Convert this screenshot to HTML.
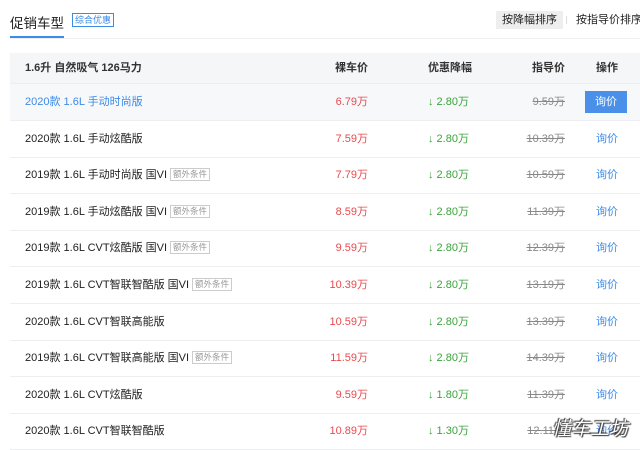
<!DOCTYPE html>
<html><head><meta charset="utf-8"><style>
*{margin:0;padding:0;box-sizing:border-box}
body{width:640px;height:450px;background:#fff;font-family:"Liberation Sans","Noto Sans CJK SC",sans-serif;position:relative;overflow:hidden;color:#333}
.a{position:absolute;white-space:nowrap}
.row{position:absolute;left:10px;width:630px;height:37px;border-bottom:1px solid #eceef1;font-size:11px;color:#222}
.row span{position:absolute;top:0;line-height:36px}
.n{left:15px}
.p{right:272px;color:#e84a4f}
.d{left:418px;color:#3aa43b}
.g{right:75px;color:#888;text-decoration:line-through}
.o{left:586px;color:#3c8be8}
.tag{display:inline-block;font-size:8.5px;color:#999;border:1px solid #ccc;line-height:11px;padding:0 2px;margin-left:3px;vertical-align:1px;font-style:normal}
</style></head><body>
<div class="a" style="left:10px;top:12px;font-size:13.5px;color:#222">促销车型</div>
<div class="a" style="left:72px;top:13px;font-size:9px;color:#3c8be8;border:1px solid #3c8be8;padding:0 2px;line-height:12px">综合优惠</div>
<div class="a" style="left:10px;top:36px;width:54px;height:2px;background:#3c8be8"></div>
<div class="a" style="left:10px;top:38px;width:630px;height:1px;background:#eceef1"></div>
<div class="a" style="left:496px;top:11px;background:#eee;font-size:11px;padding:0 6px;line-height:18px;color:#222">按降幅排序</div>
<div class="a" style="left:566px;top:16px;width:1px;height:8px;background:#ddd"></div>
<div class="a" style="left:576px;top:11px;font-size:11px;line-height:18px;color:#222">按指导价排序</div>
<div class="a" style="left:10px;top:53px;width:630px;height:31px;background:#f5f6f8;border-bottom:1px solid #eceef1;font-size:11px;font-weight:bold;color:#333">
<span class="a" style="left:15px;line-height:30px">1.6升 自然吸气 126马力</span>
<span class="a" style="right:272px;line-height:30px">裸车价</span>
<span class="a" style="left:418px;line-height:30px">优惠降幅</span>
<span class="a" style="right:75px;line-height:30px">指导价</span>
<span class="a" style="left:586px;line-height:30px">操作</span>
</div>
<div class="row" style="top:84px;background:#f7f8fa"><span class="n" style="color:#3c8be8">2020款 1.6L 手动时尚版</span><span class="p">6.79万</span><span class="d">↓ 2.80万</span><span class="g">9.59万</span><span style="left:575px;top:7px;width:42px;height:22px;line-height:22px;background:#4a90e8;color:#fff;text-align:center">询价</span></div>
<div class="row" style="top:120.6px"><span class="n">2020款 1.6L 手动炫酷版</span><span class="p">7.59万</span><span class="d">↓ 2.80万</span><span class="g">10.39万</span><span class="o">询价</span></div>
<div class="row" style="top:157.2px"><span class="n">2019款 1.6L 手动时尚版 国VI<i class="tag">额外条件</i></span><span class="p">7.79万</span><span class="d">↓ 2.80万</span><span class="g">10.59万</span><span class="o">询价</span></div>
<div class="row" style="top:193.8px"><span class="n">2019款 1.6L 手动炫酷版 国VI<i class="tag">额外条件</i></span><span class="p">8.59万</span><span class="d">↓ 2.80万</span><span class="g">11.39万</span><span class="o">询价</span></div>
<div class="row" style="top:230.4px"><span class="n">2019款 1.6L CVT炫酷版 国VI<i class="tag">额外条件</i></span><span class="p">9.59万</span><span class="d">↓ 2.80万</span><span class="g">12.39万</span><span class="o">询价</span></div>
<div class="row" style="top:267px"><span class="n">2019款 1.6L CVT智联智酷版 国VI<i class="tag">额外条件</i></span><span class="p">10.39万</span><span class="d">↓ 2.80万</span><span class="g">13.19万</span><span class="o">询价</span></div>
<div class="row" style="top:303.6px"><span class="n">2020款 1.6L CVT智联高能版</span><span class="p">10.59万</span><span class="d">↓ 2.80万</span><span class="g">13.39万</span><span class="o">询价</span></div>
<div class="row" style="top:340.2px"><span class="n">2019款 1.6L CVT智联高能版 国VI<i class="tag">额外条件</i></span><span class="p">11.59万</span><span class="d">↓ 2.80万</span><span class="g">14.39万</span><span class="o">询价</span></div>
<div class="row" style="top:376.8px"><span class="n">2020款 1.6L CVT炫酷版</span><span class="p">9.59万</span><span class="d">↓ 1.80万</span><span class="g">11.39万</span><span class="o">询价</span></div>
<div class="row" style="top:413.4px"><span class="n">2020款 1.6L CVT智联智酷版</span><span class="p">10.89万</span><span class="d">↓ 1.30万</span><span class="g">12.11万</span><span class="o">询价</span></div>
<div class="a" style="left:552px;top:414px;font-size:19px;color:#fff;text-shadow:0 0 1px #333,1px 1px 1px #333,-1px -1px 1px #333;font-style:italic">懂车工坊</div>
</body></html>
